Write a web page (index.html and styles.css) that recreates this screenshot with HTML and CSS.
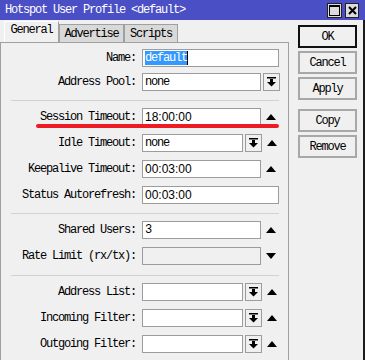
FILE: index.html
```html
<!DOCTYPE html>
<html lang="en">

<head>
  <meta charset="UTF-8">
  <title>Hotspot User Profile</title>
  <link rel="stylesheet" href="styles.css">
</head>

<body>
  <div class="window">
    <div class="titlebar">
      <span class="title">Hotspot User Profile &lt;default&gt;</span>
      <span class="tb_btn max"><span class="max_box"></span></span>
      <span class="tb_btn close">
        <svg width="9" height="9" viewBox="0 0 9 9"><path d="M1 1 L8 8 M8 1 L1 8" stroke="#000" stroke-width="2"/></svg>
      </span>
    </div>

    <div class="content">
      <div class="main">
        <div class="tabs">
          <span class="tab general active">General</span>
          <span class="tab advertise">Advertise</span>
          <span class="tab scripts">Scripts</span>
        </div>

        <div class="panel">
          <div class="group first">
            <div class="row">
              <span class="lbl">Name:</span>
              <span class="inp full"><span class="sel">default</span></span>
            </div>
            <div class="row">
              <span class="lbl">Address Pool:</span>
              <span class="inp mid">none</span>
              <span class="dd"><svg width="9" height="10" viewBox="0 0 9 10"><rect x="0" y="0" width="9" height="1.5"/><rect x="3" y="2" width="3" height="3"/><polygon points="0,5 9,5 4.5,9.5"/></svg></span>
            </div>
          </div>

          <div class="sep"></div>

          <div class="group">
            <div class="row">
              <span class="lbl">Session Timeout:</span>
              <span class="inp mid sans">18:00:00</span>
              <span class="arr"><svg width="10" height="6" viewBox="0 0 10 6"><polygon points="0,6 10,6 5,0"/></svg></span>
            </div>
            <div class="row">
              <span class="lbl">Idle Timeout:</span>
              <span class="inp short">none</span>
              <span class="dd"><svg width="9" height="10" viewBox="0 0 9 10"><rect x="0" y="0" width="9" height="1.5"/><rect x="3" y="2" width="3" height="3"/><polygon points="0,5 9,5 4.5,9.5"/></svg></span>
              <span class="arr"><svg width="10" height="6" viewBox="0 0 10 6"><polygon points="0,6 10,6 5,0"/></svg></span>
            </div>
            <div class="row">
              <span class="lbl">Keepalive Timeout:</span>
              <span class="inp mid sans">00:03:00</span>
              <span class="arr"><svg width="10" height="6" viewBox="0 0 10 6"><polygon points="0,6 10,6 5,0"/></svg></span>
            </div>
            <div class="row">
              <span class="lbl">Status Autorefresh:</span>
              <span class="inp full sans">00:03:00</span>
            </div>
          </div>

          <div class="sep"></div>

          <div class="group">
            <div class="row">
              <span class="lbl">Shared Users:</span>
              <span class="inp mid">3</span>
              <span class="arr"><svg width="10" height="6" viewBox="0 0 10 6"><polygon points="0,6 10,6 5,0"/></svg></span>
            </div>
            <div class="row">
              <span class="lbl">Rate Limit (rx/tx):</span>
              <span class="inp mid disabled"></span>
              <span class="arr"><svg width="10" height="6" viewBox="0 0 10 6"><polygon points="0,0 10,0 5,6"/></svg></span>
            </div>
          </div>

          <div class="sep wide"></div>

          <div class="group">
            <div class="row">
              <span class="lbl">Address List:</span>
              <span class="inp short"></span>
              <span class="dd"><svg width="9" height="10" viewBox="0 0 9 10"><rect x="0" y="0" width="9" height="1.5"/><rect x="3" y="2" width="3" height="3"/><polygon points="0,5 9,5 4.5,9.5"/></svg></span>
              <span class="arr"><svg width="10" height="6" viewBox="0 0 10 6"><polygon points="0,6 10,6 5,0"/></svg></span>
            </div>
            <div class="row">
              <span class="lbl">Incoming Filter:</span>
              <span class="inp short"></span>
              <span class="dd"><svg width="9" height="10" viewBox="0 0 9 10"><rect x="0" y="0" width="9" height="1.5"/><rect x="3" y="2" width="3" height="3"/><polygon points="0,5 9,5 4.5,9.5"/></svg></span>
              <span class="arr"><svg width="10" height="6" viewBox="0 0 10 6"><polygon points="0,6 10,6 5,0"/></svg></span>
            </div>
            <div class="row">
              <span class="lbl">Outgoing Filter:</span>
              <span class="inp short"></span>
              <span class="dd"><svg width="9" height="10" viewBox="0 0 9 10"><rect x="0" y="0" width="9" height="1.5"/><rect x="3" y="2" width="3" height="3"/><polygon points="0,5 9,5 4.5,9.5"/></svg></span>
              <span class="arr"><svg width="10" height="6" viewBox="0 0 10 6"><polygon points="0,6 10,6 5,0"/></svg></span>
            </div>
          </div>

          <!-- red underline drawn over the session timeout row -->
          <div class="mark"></div>
        </div>
      </div>

      <div class="side">
        <button class="btn ok">OK</button>
        <button class="btn">Cancel</button>
        <button class="btn">Apply</button>
        <button class="btn copy">Copy</button>
        <button class="btn">Remove</button>
      </div>
    </div>
  </div>
</body>

</html>
```

FILE: styles.css
```css
body {
  margin: 0;
  background-color: #f0f0f0;
  font-family: 'Liberation Mono', monospace;
  font-size: 12px;
  color: #000;
}

.window {
  width: 365px;
  height: 360px;
  overflow: hidden;
  background-color: #f0f0f0;
}

.titlebar {
  height: 20px;
  display: flex;
  align-items: center;
  background-color: #4b4fc6;
  color: #fff;
  padding-left: 5px;
}

.title {
  letter-spacing: -1.2px;
  flex: 1;
}

.tb_btn {
  width: 15px;
  height: 15px;
  box-sizing: border-box;
  border: 1px solid #222;
  background-color: #dcdcdc;
  display: flex;
  justify-content: center;
  align-items: center;
}

.max {
  margin-right: 3px;
}

.max_box {
  width: 9px;
  height: 8px;
  border: 1px solid #000;
  border-top-width: 2px;
}

.close {
  width: 14px;
  margin-right: 6px;
}

.content {
  display: flex;
  height: 340px;
  border-right: 2px solid #1c1c1c;
}

.main {
  width: 289px;
  display: flex;
  flex-direction: column;
  padding-top: 2px;
}

.tabs {
  display: flex;
  align-items: flex-end;
  padding-left: 4px;
  height: 21px;
  margin-bottom: -1px;
}

.tab {
  height: 19px;
  box-sizing: border-box;
  border: 1px solid #a0a0a0;
  border-bottom: none;
  background-color: #d9d9d9;
  text-align: center;
  line-height: 18px;
  letter-spacing: -1.2px;
}

.tab.active {
  position: relative;
  height: 22px;
  line-height: 17px;
  background-color: #f0f0f0;
  border-top-color: #fff;
  border-left-color: #fff;
}

.general {
  width: 55px;
}

.advertise {
  width: 65px;
}

.scripts {
  width: 54px;
}

.panel {
  flex: 1;
  position: relative;
  border: 1px solid #a0a0a0;
  border-bottom: none;
  padding-top: 6px;
}

.group {
  display: flex;
  flex-direction: column;
  gap: 8px;
}

.group.first {
  gap: 6px;
}

.row {
  display: flex;
  align-items: center;
  height: 18px;
}

.lbl {
  width: 135px;
  margin-right: 6px;
  text-align: right;
  letter-spacing: -1.2px;
  white-space: nowrap;
}

.inp {
  height: 18px;
  box-sizing: border-box;
  border: 1px solid #9c9c9c;
  background-color: #fff;
  padding-left: 2px;
  line-height: 16px;
  letter-spacing: -1.2px;
  white-space: nowrap;
}

.inp.sans {
  font-family: 'Liberation Sans', sans-serif;
  letter-spacing: 0;
}

.inp.full {
  width: 137px;
}

.inp.mid {
  width: 119px;
}

.inp.short {
  width: 101px;
}

.inp.disabled {
  background-color: #f0f0f0;
}

.sel {
  background-color: #3399ff;
  color: #fff;
  border-right: 1px solid #000;
  display: inline-block;
  line-height: 14px;
}

.dd {
  width: 17px;
  height: 18px;
  box-sizing: border-box;
  margin-left: 2px;
  border: 1px solid #9c9c9c;
  background-color: #f0f0f0;
  display: flex;
  justify-content: center;
  align-items: center;
}

.arr {
  width: 17px;
  margin-left: 1px;
  display: flex;
  justify-content: center;
}

.sep {
  height: 1px;
  margin: 9px 9px 7px 10px;
  background-color: #d2d2d2;
}

.sep.wide {
  margin-top: 10px;
}

.mark {
  position: absolute;
  left: 35px;
  top: 81px;
  width: 243px;
  height: 4px;
  border-radius: 2px;
  background-color: #ed1c24;
}

.side {
  margin-left: 9px;
  padding-top: 5px;
  display: flex;
  flex-direction: column;
}

.btn {
  width: 59px;
  height: 23px;
  margin-bottom: 3px;
  padding: 0;
  border: 2px solid #a8a8a8;
  background-color: #f0f0f0;
  font-family: 'Liberation Mono', monospace;
  font-size: 12px;
  letter-spacing: -1.2px;
  color: #000;
}

.btn.ok {
  border-color: #111;
}

.btn.copy {
  margin-top: 6px;
}
```
